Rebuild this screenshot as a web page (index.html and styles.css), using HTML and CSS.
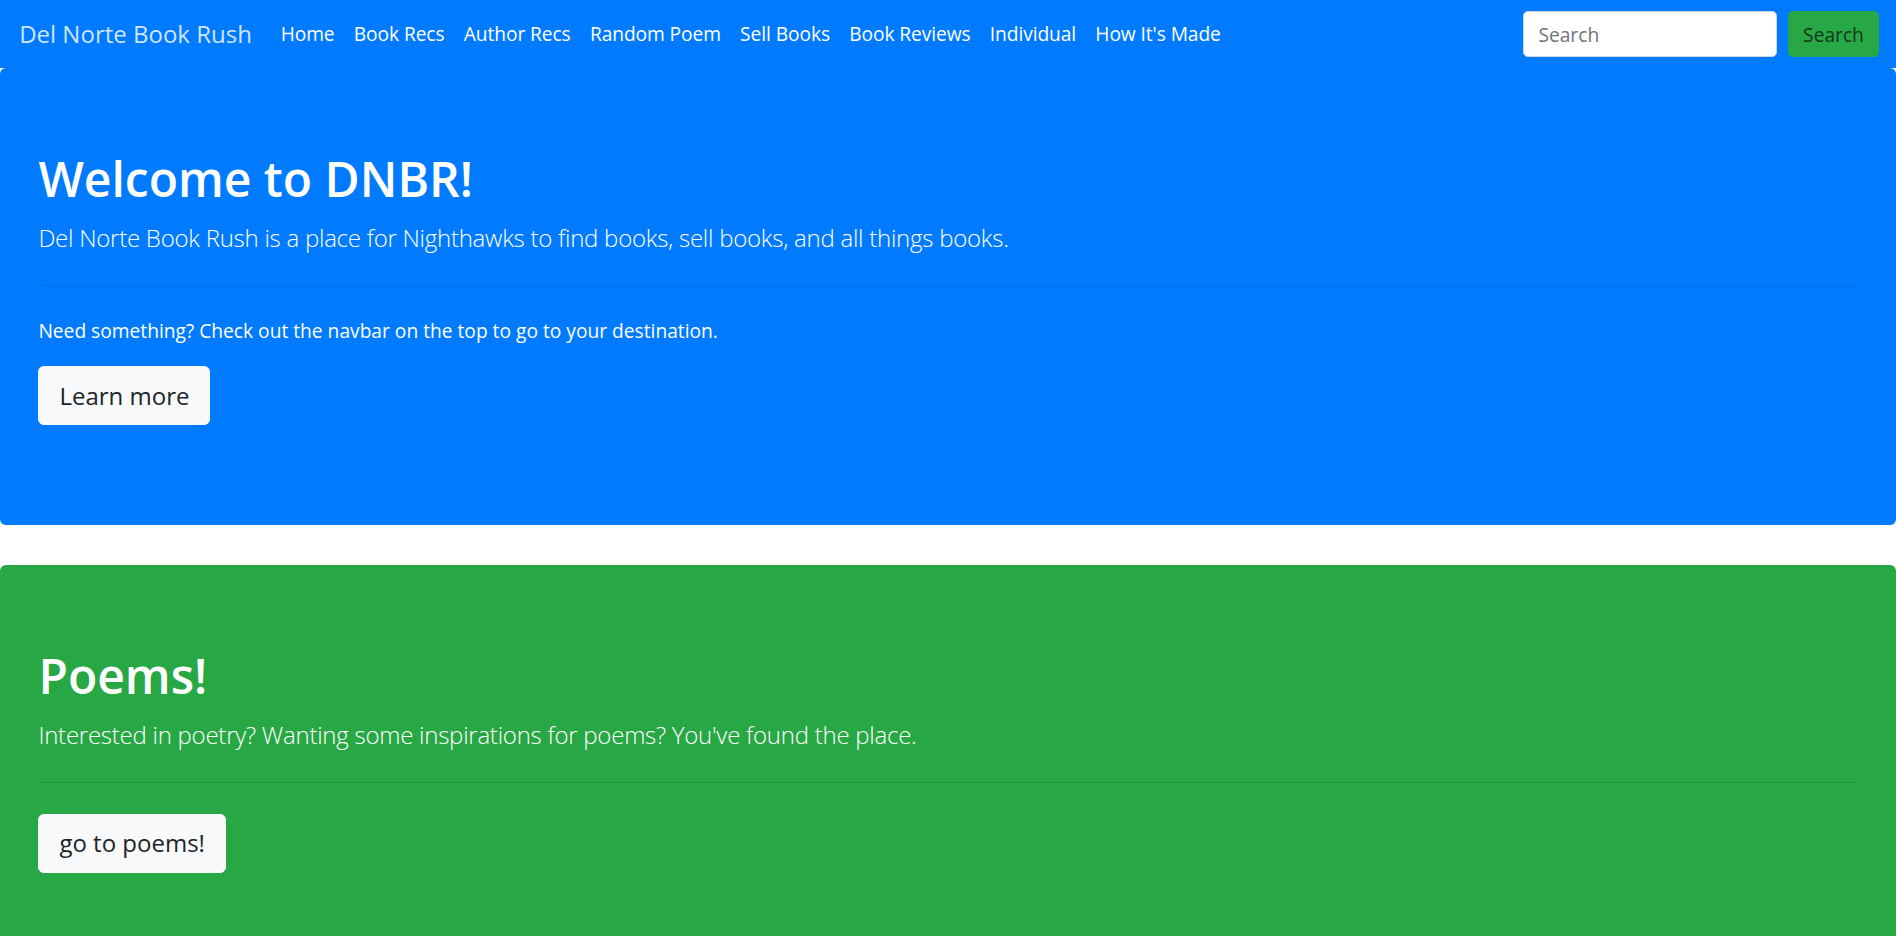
FILE: index.html
```html
<!DOCTYPE html>
<html lang="en">
<head>
<meta charset="utf-8">
<title>Del Norte Book Rush</title>
<link rel="stylesheet" href="styles.css">
</head>
<body>
<nav class="navbar">
  <a class="brand" href="#">Del Norte Book Rush</a>
  <ul class="nav-links">
    <li><a href="#">Home</a></li>
    <li><a href="#">Book Recs</a></li>
    <li><a href="#">Author Recs</a></li>
    <li><a href="#">Random Poem</a></li>
    <li><a href="#">Sell Books</a></li>
    <li><a href="#">Book Reviews</a></li>
    <li><a href="#">Individual</a></li>
    <li><a href="#">How It's Made</a></li>
  </ul>
  <form class="search-form">
    <input class="search-input" type="search" placeholder="Search" aria-label="Search">
    <button class="search-btn" type="submit">Search</button>
  </form>
</nav>

<section class="jumbotron jumbotron-blue">
  <h1 class="jumbo-title">Welcome to DNBR!</h1>
  <p class="lead">Del Norte Book Rush is a place for Nighthawks to find books, sell books, and all things books.</p>
  <hr class="divider">
  <p class="jumbo-text">Need something? Check out the navbar on the top to go to your destination.</p>
  <div class="cta"><a class="btn-light" href="#">Learn more</a></div>
</section>

<section class="jumbotron jumbotron-green">
  <h1 class="jumbo-title">Poems!</h1>
  <p class="lead">Interested in poetry? Wanting some inspirations for poems? You've found the place.</p>
  <hr class="divider">
  <div class="cta"><a class="btn-light" href="#">go to poems!</a></div>
</section>
</body>
</html>
```

FILE: styles.css
```css
* { box-sizing: border-box; }

html, body {
  margin: 0;
  padding: 0;
}

body {
  font-family: "Open Sans", "Noto Sans", sans-serif;
  font-size: 19.2px;
  line-height: 1.5;
  color: #212529;
  background: #fff;
}

a { text-decoration: none; }

/* Navbar */
.navbar {
  display: flex;
  align-items: center;
  height: 68px;
  padding: 0 17px 0 19.2px;
  background: #007bff;
}

.brand {
  font-size: 24px;
  line-height: 36px;
  color: rgba(255, 255, 255, 0.82);
  margin-right: 19.2px;
  white-space: nowrap;
}

.nav-links {
  display: flex;
  list-style: none;
  margin: 0;
  padding: 0;
  flex: 1;
}

.nav-links a {
  display: block;
  padding: 0 9.6px;
  color: #fff;
  font-size: 19.2px;
  line-height: 28.8px;
  letter-spacing: -0.08px;
  white-space: nowrap;
}

.search-form {
  display: flex;
  align-items: center;
}

.search-input {
  width: 254px;
  height: 46px;
  margin-right: 11px;
  padding: 0 14.4px;
  font-family: inherit;
  font-size: 19.2px;
  color: #495057;
  background: #fff;
  border: 1px solid #ced4da;
  border-radius: 4.8px;
  outline: none;
}

.search-input::placeholder { color: #6c757d; }

.search-btn {
  width: 91px;
  height: 46px;
  padding: 0;
  font-family: inherit;
  font-size: 19.2px;
  color: #13361b;
  background: #28a745;
  border: 1px solid #28a745;
  border-radius: 4.8px;
}

/* Jumbotrons */
.jumbotron {
  padding: 82px 38.4px 81px;
  margin-bottom: 40px;
  border-radius: 5.8px;
  color: #fff;
}

.jumbotron-blue { background: #007bff; }
.jumbotron-green { background: #28a745; }

.jumbo-title {
  margin: 0 0 12px;
  font-size: 48px;
  line-height: 57.6px;
  font-weight: 600;
}

.lead {
  margin: 0;
  font-size: 24px;
  line-height: 36px;
  font-weight: 300;
  letter-spacing: -0.25px;
}

.divider {
  margin: 29px 0 31px;
  height: 0;
  border: 0;
  border-top: 1px solid rgba(0, 0, 0, 0.1);
}

.jumbo-text {
  margin: 0 0 21px;
  font-size: 19.2px;
  line-height: 28.8px;
}

.cta {
  display: flex;
  margin-bottom: 19px;
}

.btn-light {
  display: inline-flex;
  align-items: center;
  height: 59px;
  padding: 0 20px;
  font-size: 24px;
  color: #212529;
  background: #f8f9fa;
  border: 1px solid #f8f9fa;
  border-radius: 5.8px;
}
```
